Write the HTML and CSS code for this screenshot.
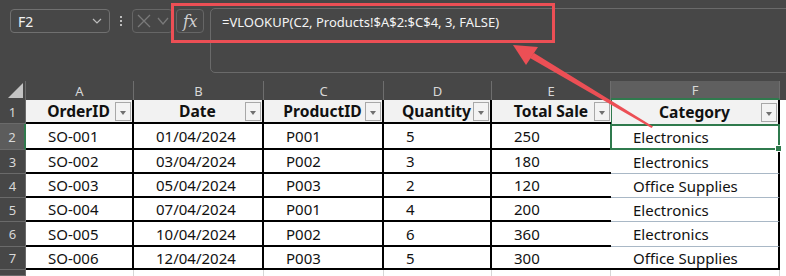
FILE: index.html
```html
<!DOCTYPE html>
<html>
<head>
<meta charset="utf-8">
<link rel="stylesheet" href="styles.css">
</head>
<body>
<div class="page">
  <div class="toolbar">
    <div class="namebox"><span>F2</span>
      <svg class="chev" width="10" height="6" viewBox="0 0 10 6"><path d="M1 1 L5 5 L9 1" fill="none" stroke="#bdbdbd" stroke-width="1.2"/></svg>
    </div>
    <div class="dots"><i></i><i></i><i></i></div>
    <div class="okbox">
      <svg width="14" height="14" viewBox="0 0 14 14"><path d="M1 1 L13 13 M13 1 L1 13" stroke="#7a7a7a" stroke-width="1.3" fill="none"/></svg>
      <svg width="12" height="8" viewBox="0 0 12 8"><path d="M1 1 L6 7 L11 1" stroke="#7a7a7a" stroke-width="1.3" fill="none"/></svg>
    </div>
    <div class="fxbox">fx</div>
    <div class="formula">=VLOOKUP(C2, Products!$A$2:$C$4, 3, FALSE)</div>
  </div>

  <div class="sheet">
    <div class="corner"></div>
    <div class="ch">A</div>
    <div class="ch">B</div>
    <div class="ch">C</div>
    <div class="ch">D</div>
    <div class="ch">E</div>
    <div class="ch ch-sel">F</div>
    <div class="ch ch-end"></div>

    <div class="rh">1</div>
    <div class="c hd b"><span>OrderID</span><i class="flt"></i></div>
    <div class="c hd b"><span>Date</span><i class="flt"></i></div>
    <div class="c hd b"><span>ProductID</span><i class="flt"></i></div>
    <div class="c hd b"><span>Quantity</span><i class="flt"></i></div>
    <div class="c hd e"><span>Total Sale</span><i class="flt"></i></div>
    <div class="c hd f f1"><span>Category</span><i class="flt"></i></div>
    <div class="x"></div>

    <div class="rh rh-sel">2</div>
    <div class="c b">SO-001</div>
    <div class="c b">01/04/2024</div>
    <div class="c b">P001</div>
    <div class="c b">5</div>
    <div class="c e">250</div>
    <div class="c f sel">Electronics</div>
    <div class="x"></div>

    <div class="rh">3</div>
    <div class="c b">SO-002</div>
    <div class="c b">03/04/2024</div>
    <div class="c b">P002</div>
    <div class="c b">3</div>
    <div class="c e">180</div>
    <div class="c f">Electronics</div>
    <div class="x"></div>

    <div class="rh">4</div>
    <div class="c b">SO-003</div>
    <div class="c b">05/04/2024</div>
    <div class="c b">P003</div>
    <div class="c b">2</div>
    <div class="c e">120</div>
    <div class="c f">Office Supplies</div>
    <div class="x"></div>

    <div class="rh">5</div>
    <div class="c b">SO-004</div>
    <div class="c b">07/04/2024</div>
    <div class="c b">P001</div>
    <div class="c b">4</div>
    <div class="c e">200</div>
    <div class="c f">Electronics</div>
    <div class="x"></div>

    <div class="rh">6</div>
    <div class="c b">SO-005</div>
    <div class="c b">10/04/2024</div>
    <div class="c b">P002</div>
    <div class="c b">6</div>
    <div class="c e">360</div>
    <div class="c f">Electronics</div>
    <div class="x"></div>

    <div class="rh">7</div>
    <div class="c b">SO-006</div>
    <div class="c b">12/04/2024</div>
    <div class="c b">P003</div>
    <div class="c b">5</div>
    <div class="c e">300</div>
    <div class="c f last">Office Supplies</div>
    <div class="x"></div>

    <div class="rh"></div>
    <div class="g"></div>
    <div class="g"></div>
    <div class="g"></div>
    <div class="g"></div>
    <div class="g"></div>
    <div class="g"></div>
    <div class="x"></div>
  </div>

  <div class="redbox"></div>
  <svg class="arrow" width="786" height="276" viewBox="0 0 786 276">
    <polygon points="513,45 526,65 538,47" fill="#ec4f55"/>
    <polygon points="530,58 534,53 653,126.5 651.5,128" fill="#ec4f55"/>
  </svg>
</div>
</body>
</html>
```

FILE: styles.css
```css
* { box-sizing: border-box; }
html, body { margin: 0; padding: 0; }
body {
  width: 786px;
  height: 276px;
  overflow: hidden;
  background: #474747;
  font-family: "Noto Sans", "Open Sans", sans-serif;
}
.page { position: relative; width: 786px; height: 276px; }

.toolbar {
  height: 81px;
  display: flex;
  align-items: flex-start;
  padding: 9px 0 0 10px;
}
.namebox {
  width: 100px;
  height: 24px;
  border: 1px solid #707070;
  border-radius: 4px;
  display: flex;
  align-items: center;
  justify-content: space-between;
  padding: 0 7px 0 7px;
  color: #f2f2f2;
  font-size: 14px;
}
.dots {
  width: 22px;
  height: 24px;
  display: flex;
  flex-direction: column;
  align-items: center;
  justify-content: center;
  gap: 2px;
}
.dots i { width: 2px; height: 2px; background: #bdbdbd; display: block; }
.okbox {
  width: 41px;
  height: 24px;
  border: 1px solid #666;
  border-radius: 4px;
  display: flex;
  align-items: center;
  justify-content: space-between;
  padding: 0 3px 0 4px;
}
.fxbox {
  width: 28px;
  height: 24px;
  margin-left: 3px;
  border: 1px solid #666;
  border-radius: 4px;
  color: #cfcfcf;
  font-family: "DejaVu Serif", "Liberation Serif", serif;
  font-style: italic;
  font-size: 16px;
  display: flex;
  align-items: center;
  justify-content: center;
  letter-spacing: -0.5px;
}
.formula {
  margin-left: 6px;
  margin-top: -1px;
  flex: 1;
  margin-right: -20px;
  height: 65px;
  border: 1px solid #6a6a6a;
  border-radius: 5px;
  color: #f4f4f4;
  font-size: 13px;
  padding: 4px 0 0 11px;
}

.sheet {
  display: grid;
  grid-template-columns: 26px 108px 130px 120px 108px 119px 169px 1fr;
  grid-template-rows: 19px 24px 26px 24px 24px 24px 25px 23px 1fr;
  height: 195px;
}
.corner {
  position: relative;
  border-right: 1px solid #6a6a6a;
}
.corner::after {
  content: "";
  position: absolute;
  right: 2px;
  bottom: 2px;
  width: 0;
  height: 0;
  border-left: 15px solid transparent;
  border-bottom: 15px solid #c4c4c4;
}
.ch {
  color: #d8d8d8;
  font-size: 13px;
  display: flex;
  align-items: center;
  justify-content: center;
  border-right: 1px solid #6e6e6e;
}
.ch-sel { background: #5f5f5f; border-bottom: 2px solid #2f7a4d; }
.ch-end { border-right: 0; }
.rh {
  color: #d8d8d8;
  font-size: 13px;
  display: flex;
  align-items: center;
  justify-content: center;
  border-bottom: 1px solid #6a6a6a;
  border-right: 1px solid #6a6a6a;
}
.rh-sel { background: #5c5c5c; border-right: 2px solid #2f7a4d; }

.c {
  background: #fff;
  color: #111;
  font-size: 15px;
  display: flex;
  align-items: center;
  padding-left: 22px;
  white-space: nowrap;
}
.b { border-right: 2px solid #000; border-bottom: 2px solid #000; }
.e { border-bottom: 2px solid #000; }
.f { border-right: 2px solid #000; border-bottom: 1px solid #a9b8c6; }
.f.last { border-bottom: 2px solid #000; }
.f1 { border-left: 1px solid #2f7a4d; border-bottom: 0; }
.hd {
  background: #f2f2f2;
  font-weight: 700;
  font-size: 15.6px;
  padding: 0 1px 0 16px;
  justify-content: space-between;
}
.hd span { flex: 1; text-align: center; }
.flt {
  display: block;
  width: 16px;
  height: 19px;
  border: 1px solid #a8a8a8;
  background: #f3f3f3;
  position: relative;
}
.flt::after {
  content: "";
  position: absolute;
  left: 4px;
  top: 8px;
  border-left: 3.5px solid transparent;
  border-right: 3.5px solid transparent;
  border-top: 4px solid #707070;
}
.sel { position: relative; }
.sel::after {
  content: "";
  position: absolute;
  left: -1px;
  top: 0;
  right: -2px;
  bottom: -1px;
  border: 2px solid #2f7a4d;
}
.sel::before {
  content: "";
  position: absolute;
  right: -4px;
  bottom: -3px;
  width: 5px;
  height: 5px;
  background: #2f7a4d;
  border: 1px solid #fff;
  z-index: 2;
}
.x { background: #fff; }
.g { background: #fff; border-right: 1px solid #d6d6d6; }

.redbox {
  position: absolute;
  left: 171px;
  top: 3px;
  width: 384px;
  height: 40px;
  border: 3.5px solid #ec4f55;
}
.arrow { position: absolute; left: 0; top: 0; pointer-events: none; }
```
